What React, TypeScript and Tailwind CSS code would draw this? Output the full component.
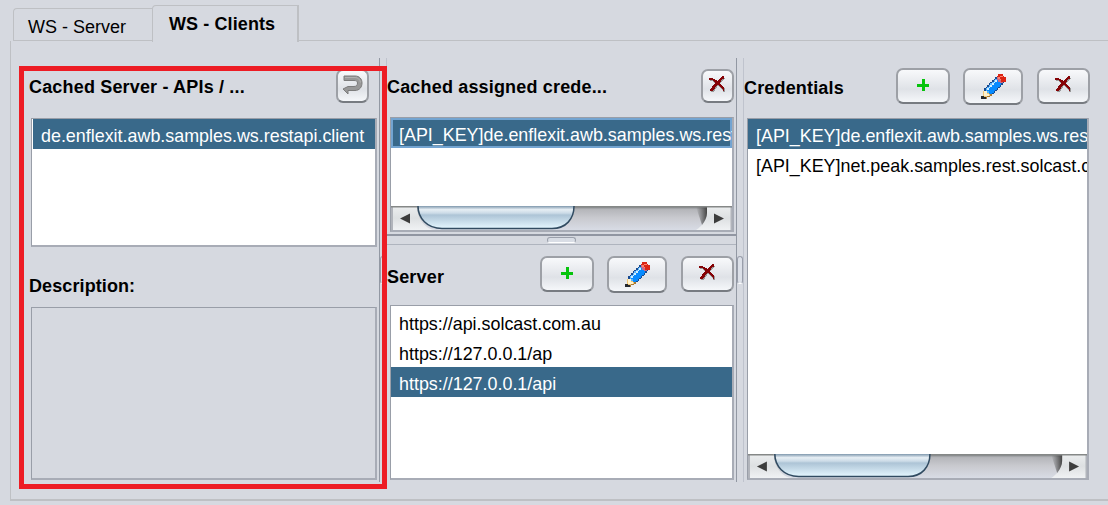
import type { ReactNode } from "react";

const palette: Record<string, string> = {
  n: "#174a91",
  b: "#078bff",
  l: "#58b5ff",
  w: "#d4f0ff",
  r: "#dc2413",
  o: "#ff806b",
  p: "#c46a86",
  y: "#f0c674",
  c: "#fff2cf",
  t: "#a87832",
  k: "#24282e",
  d: "#850306",
  g: "#999999",
};

const pencil = [
  "...........rrr..",
  "..........rroor.",
  ".........nporrrr",
  "........nlpporrr",
  ".......nlwbpprrr",
  "......nlwbbbppn.",
  ".....nlwbbbbbn..",
  "....nlwbbbbbn...",
  "...nlwbbbbbn....",
  "..nlwbbbbbn.....",
  "..nlbbbbbn......",
  ".ycclbbbn.......",
  ".yccybbn........",
  ".ycccyt.........",
  "kkyytt..........",
  "kkkt............",
];

const cross = [
  ".............dd...",
  "............ddd...",
  "dddd.......ddddg..",
  "dddddd....dddgg...",
  ".gggdddd.dddgg....",
  "....gdddddddg.....",
  ".....gdddddg......",
  "......ddddd.......",
  ".....ddddddd......",
  "....ddddggddd.....",
  "...ddddg..gddd....",
  "...dddgg...gddd...",
  "..ddddg.....gddg..",
  ".ddddg.......gdg..",
  ".dddgg........dg..",
  "..ggg.........gg..",
];

function PixelIcon({ rows, className }: { rows: string[]; className: string }) {
  return (
    <svg className={className} viewBox={`0 0 ${rows[0].length} ${rows.length}`} shapeRendering="crispEdges">
      {rows.flatMap((row, y) =>
        [...row].map((key, x) =>
          key === "." ? null : <rect key={`${x}-${y}`} x={x} y={y} width="1" height="1" fill={palette[key]} />,
        ),
      )}
    </svg>
  );
}

function PlusIcon() {
  return (
    <svg width="12" height="12" viewBox="0 0 12 12" shapeRendering="crispEdges">
      <path d="M4.500 0h3v4.500H12v3H7.500V12h-3V7.500H0v-3h4.500z" fill="#06c40c" />
    </svg>
  );
}

function DeleteIcon() {
  return <PixelIcon rows={cross} className="h-4 w-[18px]" />;
}

function PencilIcon() {
  return <PixelIcon rows={pencil} className="h-[25px] w-[25px]" />;
}

function ReturnIcon() {
  return (
    <svg width="21" height="20" viewBox="0 0 21 20">
      <path
        d="M2 1h11c4.500 0 7 3 7 7s-2.500 7.500-7 7.500H6V19l-5-5 5-2.500h6c2.500 0 3.500-1.500 3.500-3.500S14 5.500 12 5.500H2z"
        fill="#989898"
        stroke="#7c7c7c"
      />
      <path d="M3 2.500h10c3 0 5 2 5.500 5" fill="none" stroke="#b2b2b2" />
    </svg>
  );
}

function Button({ className, children }: { className: string; children: ReactNode }) {
  return (
    <button
      className={`flex shrink-0 items-center justify-center rounded-[7px] border-2 border-[#9da0a6] border-b-[#777b81] bg-linear-to-b from-[#f8f9fb] via-[#dfe2e7] via-60% to-[#f5f7fa] ${className}`}
    >
      {children}
    </button>
  );
}

function Actions() {
  return (
    <>
      <Button className="h-9 w-[54px] pb-0.5"><PlusIcon /></Button>
      <Button className="ml-[13px] h-[37px] w-[60px]"><PencilIcon /></Button>
      <Button className="ml-3.5 h-9 w-[53px] pb-1"><DeleteIcon /></Button>
    </>
  );
}

function Row({ children, selected = false, focus = false }: { children: ReactNode; selected?: boolean; focus?: boolean }) {
  return (
    <div
      className={`flex h-[30px] shrink-0 items-center overflow-hidden whitespace-nowrap pt-1 pl-2 text-[17.900px] ${selected ? "bg-[#39698a] text-white" : "text-black"} ${focus ? "shadow-[inset_0_0_0_2px_#73a4d1]" : ""}`}
    >
      {children}
    </div>
  );
}

function ScrollBar({ id }: { id: string }) {
  return (
    <svg className="mt-auto block shrink-0" width="100%" height="24" viewBox="0 0 341 24" preserveAspectRatio="none">
      <defs>
        <linearGradient id={`${id}-thumb`} x1="0" y1="0" x2="0" y2="1">
          <stop offset="0" stopColor="#7f98ad" />
          <stop offset=".16" stopColor="#e6eef4" />
          <stop offset=".32" stopColor="#cbdbe7" />
          <stop offset=".4" stopColor="#adc4d6" />
          <stop offset="1" stopColor="#e5f7ff" />
        </linearGradient>
        <linearGradient id={`${id}-track`} x1="0" y1="0" x2="0" y2="1">
          <stop offset="0" stopColor="#777b7d" />
          <stop offset=".15" stopColor="#b5b6ba" />
          <stop offset=".5" stopColor="#c9cacf" />
          <stop offset="1" stopColor="#d8dce5" />
        </linearGradient>
        <linearGradient id={`${id}-end`}>
          <stop offset="0" stopColor="#555" stopOpacity="0" />
          <stop offset="1" stopColor="#444" />
        </linearGradient>
        <linearGradient id={`${id}-cap`} x1="0" y1="0" x2="0" y2="1">
          <stop offset="0" stopColor="#eceeef" />
          <stop offset=".5" stopColor="#dde0e2" />
          <stop offset="1" stopColor="#f0f2f4" />
        </linearGradient>
      </defs>
      <path d="M0 0h341v24H0z" fill={`url(#${id}-cap)`} />
      <path d="M0 1h2v23H0zM339.500 1h1.500v23h-1.500z" fill="#b1b4bb" />
      <path d="M26 0h290v7c0 7-6 14-11 17H45C34 24 26 12 26 0z" fill={`url(#${id}-track)`} />
      <path d="M305 1h11v6c0 4-2 8-5 12z" fill={`url(#${id}-end)`} />
      <path d="M27 0c0 12 9 22.500 24 22.500h110c14 0 22-9.500 22-22.500" fill={`url(#${id}-thumb)`} stroke="#314b61" strokeWidth="1.500" />
      <path d="M0 .75h26M184 .75h157" stroke="#858887" strokeWidth="1.500" />
      <path d="M9 12.500l10-5v10zM333 12.500l-10-5v10z" fill="#3c3c3c" />
    </svg>
  );
}

function ListBox({ className, children }: { className: string; children?: ReactNode }) {
  return (
    <div className={`flex shrink-0 flex-col overflow-hidden border border-[#999ea8] border-r-2 border-r-[#a8acb6] border-b-2 border-b-[#a8acb6] ${className}`}>
      {children}
    </div>
  );
}

function Divider() {
  return (
    <div className="flex h-[424px] w-2 shrink-0 items-center border-x border-l-[#9298a3] border-r-[#bfc3cd]">
      <div className="h-[28px] w-full rounded-[3px] border border-[#999eaa] border-b-white bg-[#dce0e8]" />
    </div>
  );
}

export default function App() {
  return (
    <main className="relative h-[505px] w-[1108px] overflow-hidden bg-[#d6d9e0] font-['Liberation_Sans',sans-serif] text-[18px] leading-5 text-black">
      <nav className="flex h-[41px] items-end pl-[13px]">
        <div className="flex h-[33px] w-[139px] items-center rounded-tl border border-r-0 border-[#bec0c4] pt-1 pl-3.5">WS - Server</div>
        <div className="relative -mb-px flex h-[37px] w-[147px] items-center rounded-tl border border-r-2 border-b-0 border-[#bec0c4] bg-[#d6d9e0] pl-4 font-bold tracking-[0.100px]">WS - Clients</div>
        <div className="h-px flex-1 bg-[#bec0c4]" />
      </nav>
      <div className="ml-[10px] flex h-[460px] border-b-2 border-l border-[#bec0c4] pt-[17px] pl-2">
        <section className="flex w-[360px] shrink-0 flex-col pl-[10px]">
          <header className="flex h-[60px] items-center font-bold tracking-[0.170px]">
            <span className="w-[307px] pb-0.5">Cached Server - APIs / ...</span>
            <Button className="mt-[-5px] h-[34px] w-[33px] pb-0.5"><ReturnIcon /></Button>
          </header>
          <ListBox className="ml-0.5 h-[129px] w-[346px] bg-white pl-px">
            <Row selected>de.enflexit.awb.samples.ws.restapi.client</Row>
          </ListBox>
          <div className="flex h-[60px] items-center pt-[18px] font-bold tracking-[0.100px]">Description:</div>
          <ListBox className="ml-0.5 h-[173px] w-[346px]" />
        </section>
        <Divider />
        <section className="flex w-[349px] shrink-0 flex-col">
          <header className="flex h-[59px] items-center font-bold tracking-[0.170px]">
            <span className="w-[314px] pb-0.5">Cached assigned crede...</span>
            <Button className="mt-[-4px] h-[34px] w-[33px] pb-1"><DeleteIcon /></Button>
          </header>
          <ListBox className="ml-[3px] h-[115px] w-[344px] bg-white">
            <Row selected focus>[API_KEY]de.enflexit.awb.samples.ws.restapi.client</Row>
            <ScrollBar id="assigned" />
          </ListBox>
          <div className="mt-0.5 flex h-[11px] w-full justify-center border-t-2 border-b border-t-[#9196a2] border-b-[#afb4be] pt-px">
            <div className="h-[6px] w-[29px] rounded-[3px] border border-[#9ba0ab] border-b-white bg-[#d9dde5]" />
          </div>
          <header className="flex h-[60px] items-center font-bold tracking-[0.170px]">
            <span className="w-[153px] pt-1">Server</span>
            <div className="mt-[-2px] flex items-center"><Actions /></div>
          </header>
          <ListBox className="ml-[3px] h-[175px] w-[344px] bg-white pt-px">
            <Row>https://api.solcast.com.au</Row>
            <Row>https://127.0.0.1/ap</Row>
            <Row selected>https://127.0.0.1/api</Row>
          </ListBox>
        </section>
        <Divider />
        <section className="flex w-[345px] shrink-0 flex-col">
          <header className="flex h-[60px] items-center font-bold tracking-[0.170px]">
            <span className="w-[152px] shrink-0">Credentials</span>
            <div className="mt-[-4px] flex items-center"><Actions /></div>
          </header>
          <ListBox className="ml-[3px] h-[362px] w-[342px] bg-white">
            <Row selected>[API_KEY]de.enflexit.awb.samples.ws.restapi.client</Row>
            <Row>[API_KEY]net.peak.samples.rest.solcast.client</Row>
            <ScrollBar id="credentials" />
          </ListBox>
        </section>
      </div>
      <div className="pointer-events-none absolute top-[66px] left-[19px] h-[423px] w-[368px] border-5 border-[#ed1c24]" />
    </main>
  );
}
